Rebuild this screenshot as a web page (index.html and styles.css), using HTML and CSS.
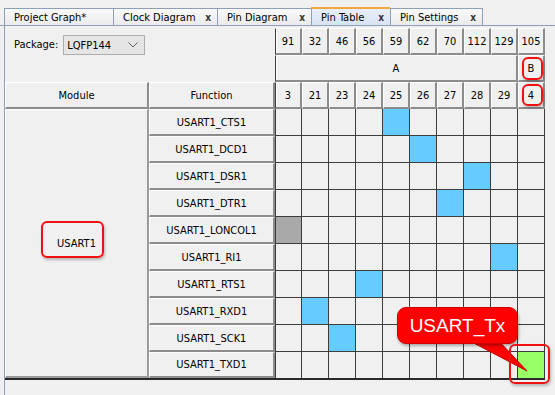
FILE: index.html
```html
<!DOCTYPE html>
<html>
<head>
<meta charset="utf-8">
<link rel="stylesheet" href="styles.css">
</head>
<body>
<div class="tabbar">
  <div class="tab w1"><span>Project Graph*</span></div>
  <div class="tab w2"><span>Clock Diagram</span><b class="x">x</b></div>
  <div class="tab w3"><span>Pin Diagram</span><b class="x">x</b></div>
  <div class="tab w4 active"><span>Pin Table</span><b class="x">x</b></div>
  <div class="tab w5 last"><span>Pin Settings</span><b class="x">x</b></div>
</div>
<div class="panel">
  <div class="grid">
    <div class="pkg"><span class="lbl">Package:</span><div class="combo"><span>LQFP144</span><svg width="10" height="6" viewBox="0 0 10 6"><path d="M0.5 0.5 L5 5 L9.5 0.5" fill="none" stroke="#606060" stroke-width="1"/></svg></div></div>
    <div class="h f">91</div><div class="h">32</div><div class="h">46</div><div class="h">56</div><div class="h">59</div><div class="h">62</div><div class="h">70</div><div class="h">112</div><div class="h">129</div><div class="h">105</div>
    <div class="h f span9">A</div><div class="h">B</div>
    <div class="h">Module</div><div class="h">Function</div>
    <div class="h f">3</div><div class="h">21</div><div class="h">23</div><div class="h">24</div><div class="h">25</div><div class="h">26</div><div class="h">27</div><div class="h">28</div><div class="h">29</div><div class="h">4</div>
    <div class="h mod">USART1</div>

    <div class="h fn">USART1_CTS1</div>
    <div class="p f"></div><div class="p"></div><div class="p"></div><div class="p"></div><div class="p cy"></div><div class="p"></div><div class="p"></div><div class="p"></div><div class="p"></div><div class="p"></div>

    <div class="h fn">USART1_DCD1</div>
    <div class="p f"></div><div class="p"></div><div class="p"></div><div class="p"></div><div class="p"></div><div class="p cy"></div><div class="p"></div><div class="p"></div><div class="p"></div><div class="p"></div>

    <div class="h fn">USART1_DSR1</div>
    <div class="p f"></div><div class="p"></div><div class="p"></div><div class="p"></div><div class="p"></div><div class="p"></div><div class="p"></div><div class="p cy"></div><div class="p"></div><div class="p"></div>

    <div class="h fn">USART1_DTR1</div>
    <div class="p f"></div><div class="p"></div><div class="p"></div><div class="p"></div><div class="p"></div><div class="p"></div><div class="p cy"></div><div class="p"></div><div class="p"></div><div class="p"></div>

    <div class="h fn">USART1_LONCOL1</div>
    <div class="p f gy"></div><div class="p"></div><div class="p"></div><div class="p"></div><div class="p"></div><div class="p"></div><div class="p"></div><div class="p"></div><div class="p"></div><div class="p"></div>

    <div class="h fn">USART1_RI1</div>
    <div class="p f"></div><div class="p"></div><div class="p"></div><div class="p"></div><div class="p"></div><div class="p"></div><div class="p"></div><div class="p"></div><div class="p cy"></div><div class="p"></div>

    <div class="h fn">USART1_RTS1</div>
    <div class="p f"></div><div class="p"></div><div class="p"></div><div class="p cy"></div><div class="p"></div><div class="p"></div><div class="p"></div><div class="p"></div><div class="p"></div><div class="p"></div>

    <div class="h fn">USART1_RXD1</div>
    <div class="p f"></div><div class="p cy"></div><div class="p"></div><div class="p"></div><div class="p"></div><div class="p"></div><div class="p"></div><div class="p"></div><div class="p"></div><div class="p"></div>

    <div class="h fn">USART1_SCK1</div>
    <div class="p f"></div><div class="p"></div><div class="p cy"></div><div class="p"></div><div class="p"></div><div class="p"></div><div class="p"></div><div class="p"></div><div class="p"></div><div class="p"></div>

    <div class="h fn">USART1_TXD1</div>
    <div class="p f b"></div><div class="p b"></div><div class="p b"></div><div class="p b"></div><div class="p b"></div><div class="p b"></div><div class="p b"></div><div class="p b"></div><div class="p b"></div><div class="p b gr"></div>
  </div>
</div>

<div class="mark m-mod"></div>
<div class="mark m-b"></div>
<div class="mark m-4"></div>
<svg class="tail" width="80" height="50" viewBox="460 330 80 50"><polygon points="468,340 498,340 527,371" fill="#ff0000" stroke="#c80000" stroke-width="1"/></svg>
<div class="bubble">USART_Tx</div>
<div class="mark m-g"></div>
</body>
</html>
```
FILE: styles.css
```css
body {
  margin: 0;
  width: 555px;
  height: 395px;
  overflow: hidden;
  position: relative;
  background: #f0f0f0;
  font-family: "DejaVu Sans Condensed", "DejaVu Sans", sans-serif;
  font-stretch: condensed;
  font-size: 11px;
  color: #000;
}

.tabbar {
  display: flex;
  height: 26px;
  box-sizing: border-box;
  padding: 8px 0 0 4px;
  border-bottom: 1px solid #8ea0b8;
}

.tab {
  height: 17px;
  box-sizing: border-box;
  border: 1px solid #8ea0b8;
  border-right: none;
  border-bottom: none;
  background: linear-gradient(#f9f9f9, #ebebeb);
  display: flex;
  align-items: center;
  padding: 0 6px 0 9px;
  white-space: nowrap;
}
.tab.last { border-right: 1px solid #8ea0b8; }
.w1 { width: 109px; }
.w2 { width: 104px; }
.w3 { width: 94px; }
.w4 { width: 79px; }
.w5 { width: 93px; }

.tab.active {
  height: 18px;
  margin-top: -1px;
  border-top: 2px solid #f2a73a;
  background: linear-gradient(#e9eff8, #d7e2f2);
}

.x {
  margin-left: auto;
  font-family: "DejaVu Sans", sans-serif;
  font-weight: bold;
  font-size: 10px;
  color: #333;
  line-height: 1;
  padding-top: 2px;
}

.panel {
  margin-left: 4px;
  border-left: 1px solid #8ea0b8;
  padding-top: 2px;
  height: 369px;
  box-sizing: border-box;
}

.grid {
  display: grid;
  grid-template-columns: 144px 126px repeat(10, 27px);
  grid-template-rows: repeat(12, 27px) 26px;
  width: 540px;
  border-bottom: 2px solid #2a2a2a;
}

.pkg {
  grid-column: 1 / 3;
  grid-row: 1 / 3;
  display: flex;
  align-items: flex-start;
  gap: 5px;
  padding: 7px 0 0 9px;
}
.lbl { line-height: 20px; }
.combo {
  width: 82px;
  height: 20px;
  box-sizing: border-box;
  border: 1px solid #adadad;
  background: #e5e5e5;
  display: flex;
  align-items: center;
  justify-content: space-between;
  padding: 0 6px 0 3px;
}

.h {
  box-sizing: border-box;
  background: #f0f0f0;
  border-style: solid;
  border-width: 1px 2px 2px 1px;
  border-color: #ffffff #8c8c8c #8c8c8c #ffffff;
  display: flex;
  align-items: center;
  justify-content: center;
  white-space: nowrap;
}
.h.f {
  border-left-color: #3c3c3c;
  box-shadow: inset 1px 0 #ffffff;
}
.span9 { grid-column: span 9; }

.mod {
  grid-column: 1;
  grid-row: 4 / 14;
  border-color: #ffffff #9a9a9a #9a9a9a #ffffff;
}
.fn { grid-column: 2; }

.p {
  box-sizing: border-box;
  background: #f0f0f0;
  border-right: 1px solid #3c3c3c;
  border-bottom: 1px solid #3c3c3c;
}
.p.f { border-left: 1px solid #3c3c3c; }
.p.b { border-bottom: none; }
.cy { background: #66ccff; }
.gr { background: #99ff66; }
.gy { background: #a9a9a9; }

.mark {
  position: absolute;
  box-sizing: border-box;
  border: 2px solid #ee1111;
  border-radius: 6px;
  box-shadow: 1px 2px 3px rgba(0, 0, 0, 0.25);
}
.m-mod { left: 41px; top: 221px; width: 63px; height: 37px; }
.m-b { left: 522px; top: 57px; width: 21px; height: 23px; }
.m-4 { left: 522px; top: 84px; width: 21px; height: 22px; }
.m-g { left: 509px; top: 344px; width: 41px; height: 40px; }

.tail {
  position: absolute;
  left: 460px;
  top: 330px;
}
.bubble {
  position: absolute;
  left: 397px;
  top: 307px;
  width: 121px;
  height: 37px;
  box-sizing: border-box;
  background: #ff0000;
  border: 1px solid #cc0000;
  border-radius: 9px;
  box-shadow: 1px 2px 3px rgba(0, 0, 0, 0.3);
  color: #ffffff;
  font-family: "Liberation Sans", Arial, sans-serif;
  font-size: 19px;
  display: flex;
  align-items: center;
  justify-content: center;
}
```
